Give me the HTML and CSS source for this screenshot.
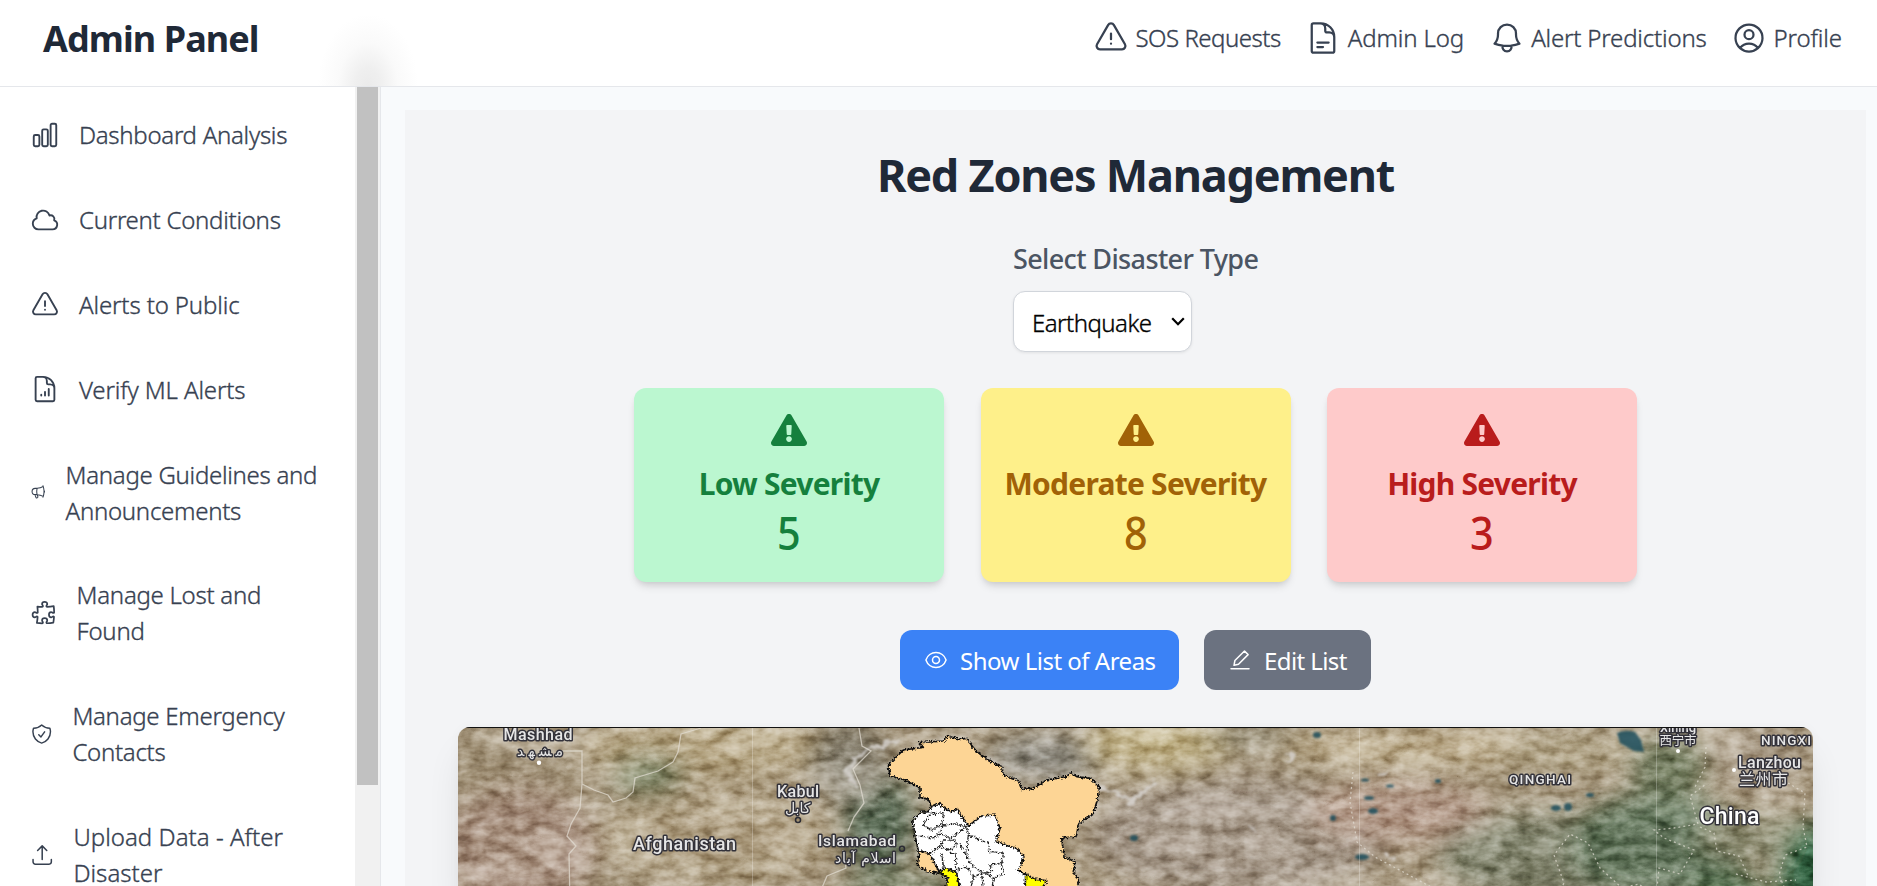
FILE: index.html
```
<!DOCTYPE html>
<html lang="en">
<head>
<meta charset="utf-8">
<title>Admin Panel</title>
<link rel="stylesheet" href="styles.css">
</head>
<body>
<div class="app">
  <header class="topbar">
    <div class="topbar-glow"></div>
    <h1 class="brand">Admin Panel</h1>
    <nav class="topnav">
      <a class="toplink"><svg class="icon" viewBox="0 0 24 24"><path d="M12 9v3.75m-9.303 3.376c-.866 1.5.217 3.374 1.948 3.374h14.71c1.73 0 2.813-1.874 1.948-3.374L13.949 3.378c-.866-1.5-3.032-1.5-3.898 0L2.697 16.126ZM12 15.75h.007v.008H12v-.008Z"/></svg><span class="t-sos">SOS Requests</span></a>
      <a class="toplink"><svg class="icon" viewBox="0 0 24 24"><path d="M19.5 14.25v-2.625a3.375 3.375 0 0 0-3.375-3.375h-1.5A1.125 1.125 0 0 1 13.5 7.125v-1.5a3.375 3.375 0 0 0-3.375-3.375H8.25m0 12.75h7.5m-7.5 3H12M10.5 2.25H5.625c-.621 0-1.125.504-1.125 1.125v17.25c0 .621.504 1.125 1.125 1.125h12.75c.621 0 1.125-.504 1.125-1.125V11.25a9 9 0 0 0-9-9Z"/></svg><span class="t-log">Admin Log</span></a>
      <a class="toplink"><svg class="icon" viewBox="0 0 24 24"><path d="M14.857 17.082a23.848 23.848 0 0 0 5.454-1.31A8.967 8.967 0 0 1 18 9.75V9A6 6 0 0 0 6 9v.75a8.967 8.967 0 0 1-2.312 6.022c1.733.64 3.56 1.085 5.455 1.31m5.714 0a24.255 24.255 0 0 1-5.714 0m5.714 0a3 3 0 1 1-5.714 0"/></svg><span class="t-pred">Alert Predictions</span></a>
      <a class="toplink"><svg class="icon" viewBox="0 0 24 24"><path d="M17.982 18.725A7.488 7.488 0 0 0 12 15.75a7.488 7.488 0 0 0-5.982 2.975m11.963 0a9 9 0 1 0-11.963 0m11.963 0A8.966 8.966 0 0 1 12 21a8.966 8.966 0 0 1-5.982-2.275M15 9.75a3 3 0 1 1-6 0 3 3 0 0 1 6 0Z"/></svg><span class="t-prof">Profile</span></a>
    </nav>
  </header>
  <div class="body">
    <aside class="sidebar">
      <nav class="menu">
        <a class="item"><svg class="icon" viewBox="0 0 24 24"><path d="M3 13.125C3 12.504 3.504 12 4.125 12h2.25c.621 0 1.125.504 1.125 1.125v6.75C7.5 20.496 6.996 21 6.375 21h-2.25A1.125 1.125 0 0 1 3 19.875v-6.75ZM9.75 8.625c0-.621.504-1.125 1.125-1.125h2.25c.621 0 1.125.504 1.125 1.125v11.25c0 .621-.504 1.125-1.125 1.125h-2.25a1.125 1.125 0 0 1-1.125-1.125V8.625ZM16.5 4.125c0-.621.504-1.125 1.125-1.125h2.25C20.496 3 21 3.504 21 4.125v15.75c0 .621-.504 1.125-1.125 1.125h-2.25a1.125 1.125 0 0 1-1.125-1.125V4.125Z"/></svg><span class="m1">Dashboard Analysis</span></a>
        <a class="item"><svg class="icon" viewBox="0 0 24 24"><path d="M2.25 15a4.5 4.5 0 0 0 4.5 4.5H18a3.75 3.75 0 0 0 1.332-7.257 3 3 0 0 0-3.758-3.848 5.25 5.25 0 0 0-10.233 2.33A4.502 4.502 0 0 0 2.25 15Z"/></svg><span class="m2">Current Conditions</span></a>
        <a class="item"><svg class="icon" viewBox="0 0 24 24"><path d="M12 9v3.75m-9.303 3.376c-.866 1.5.217 3.374 1.948 3.374h14.71c1.73 0 2.813-1.874 1.948-3.374L13.949 3.378c-.866-1.5-3.032-1.5-3.898 0L2.697 16.126ZM12 15.75h.007v.008H12v-.008Z"/></svg><span class="m3">Alerts to Public</span></a>
        <a class="item"><svg class="icon" viewBox="0 0 24 24"><path d="M19.5 14.25v-2.625a3.375 3.375 0 0 0-3.375-3.375h-1.5A1.125 1.125 0 0 1 13.5 7.125v-1.5a3.375 3.375 0 0 0-3.375-3.375H8.25M9 16.5v.75m3-3v3M15 12v5.25m-4.5-15H5.625c-.621 0-1.125.504-1.125 1.125v17.25c0 .621.504 1.125 1.125 1.125h12.75c.621 0 1.125-.504 1.125-1.125V11.25a9 9 0 0 0-9-9Z"/></svg><span class="m3">Verify ML Alerts</span></a>
        <a class="item"><svg class="icon w-megaphone" viewBox="0 0 24 24"><path d="M10.34 15.84c-.688-.06-1.386-.09-2.09-.09H7.5a4.5 4.5 0 1 1 0-9h.75c.704 0 1.402-.03 2.09-.09m0 9.18c.253.962.584 1.892.985 2.783.247.55.06 1.21-.463 1.511l-.657.38c-.551.318-1.26.117-1.527-.461a20.845 20.845 0 0 1-1.44-4.282m3.102.069a18.03 18.03 0 0 1-.59-4.59c0-1.586.205-3.124.59-4.59m0 9.18a23.848 23.848 0 0 1 8.835 2.535M10.34 6.66a23.847 23.847 0 0 0 8.835-2.535m0 0A23.74 23.74 0 0 0 18.795 3m.38 1.125a23.91 23.91 0 0 1 1.014 5.395m-1.014 8.855c-.118.38-.245.754-.38 1.125m.38-1.125a23.91 23.91 0 0 0 1.014-5.395m0-3.46c.495.413.811 1.035.811 1.73 0 .695-.316 1.317-.811 1.73m0-3.46a24.347 24.347 0 0 1 0 3.46"/></svg><span class="m1">Manage Guidelines and<br>Announcements</span></a>
        <a class="item"><svg class="icon w-puzzle" viewBox="0 0 24 24"><path d="M14.25 6.087c0-.355.186-.676.401-.959.221-.29.349-.634.349-1.003 0-1.036-1.007-1.875-2.25-1.875s-2.25.84-2.25 1.875c0 .369.128.713.349 1.003.215.283.401.604.401.959v0a.64.64 0 0 1-.657.643 48.39 48.39 0 0 1-4.163-.3c.186 1.613.293 3.25.315 4.907a.656.656 0 0 1-.658.663v0c-.355 0-.676-.186-.959-.401a1.647 1.647 0 0 0-1.003-.349c-1.036 0-1.875 1.007-1.875 2.25s.84 2.25 1.875 2.25c.369 0 .713-.128 1.003-.349.283-.215.604-.401.959-.401v0c.31 0 .555.26.532.57a48.039 48.039 0 0 1-.642 5.056c1.518.19 3.058.309 4.616.354a.64.64 0 0 0 .657-.643v0c0-.355-.186-.676-.401-.959a1.647 1.647 0 0 1-.349-1.003c0-1.035 1.008-1.875 2.25-1.875 1.243 0 2.25.84 2.25 1.875 0 .369-.128.713-.349 1.003-.215.283-.4.604-.4.959v0c0 .333.277.599.61.58a48.1 48.1 0 0 0 5.427-.63 48.05 48.05 0 0 0 .582-4.717.532.532 0 0 0-.533-.57v0c-.355 0-.676.186-.959.401-.29.221-.634.349-1.003.349-1.035 0-1.875-1.007-1.875-2.25s.84-2.25 1.875-2.25c.37 0 .713.128 1.003.349.283.215.604.401.96.401v0a.656.656 0 0 0 .658-.663 48.422 48.422 0 0 0-.37-5.36c-1.886.342-3.81.574-5.766.689a.578.578 0 0 1-.61-.58v0Z"/></svg><span class="m2">Manage Lost and<br>Found</span></a>
        <a class="item"><svg class="icon w-shield" viewBox="0 0 24 24"><path d="M9 12.75 11.25 15 15 9.75m-3-7.036A11.959 11.959 0 0 1 3.598 6 11.99 11.99 0 0 0 3 9.749c0 5.592 3.824 10.29 9 11.623 5.176-1.332 9-6.03 9-11.622 0-1.31-.21-2.571-.598-3.751h-.152c-3.196 0-6.1-1.248-8.25-3.285Z"/></svg><span class="m1">Manage Emergency<br>Contacts</span></a>
        <a class="item"><svg class="icon w-upload" viewBox="0 0 24 24"><path d="M3 16.5v2.25A2.25 2.25 0 0 0 5.25 21h13.5A2.25 2.25 0 0 0 21 18.75V16.5m-13.5-9L12 3m0 0 4.5 4.5M12 3v13.5"/></svg><span class="m4">Upload Data - After<br>Disaster</span></a>
      </nav>
      <div class="scrollbar"><div class="thumb"></div></div>
    </aside>
    <main class="content">
      <section class="panel">
        <h2 class="title">Red Zones Management</h2>
        <div class="field">
          <label class="label">Select Disaster Type</label>
          <div class="select"><span class="t-quake">Earthquake</span><svg class="chevron" viewBox="0 0 14 9"><path d="M1.2 1.2 7 7.2l5.8-6"/></svg></div>
        </div>
        <div class="cards">
          <article class="card low"><svg class="warn" viewBox="0 0 576 512"><path d="M569.517 440.013C587.975 472.007 564.806 512 527.94 512H48.054c-36.937 0-59.999-40.055-41.577-71.987L246.423 23.985c18.467-32.009 64.72-31.951 83.154 0l239.94 416.028zM288 354c-25.405 0-46 20.595-46 46s20.595 46 46 46 46-20.595 46-46-20.595-46-46-46zm-43.673-165.346l7.418 136c.347 6.364 5.609 11.346 11.982 11.346h48.546c6.373 0 11.635-4.982 11.982-11.346l7.418-136c.375-6.874-5.098-12.654-11.982-12.654h-63.383c-6.884 0-12.356 5.78-11.981 12.654z"/></svg><h3 class="card-title">Low Severity</h3><p class="count">5</p></article>
          <article class="card moderate"><svg class="warn" viewBox="0 0 576 512"><path d="M569.517 440.013C587.975 472.007 564.806 512 527.94 512H48.054c-36.937 0-59.999-40.055-41.577-71.987L246.423 23.985c18.467-32.009 64.72-31.951 83.154 0l239.94 416.028zM288 354c-25.405 0-46 20.595-46 46s20.595 46 46 46 46-20.595 46-46-20.595-46-46-46zm-43.673-165.346l7.418 136c.347 6.364 5.609 11.346 11.982 11.346h48.546c6.373 0 11.635-4.982 11.982-11.346l7.418-136c.375-6.874-5.098-12.654-11.982-12.654h-63.383c-6.884 0-12.356 5.78-11.981 12.654z"/></svg><h3 class="card-title">Moderate Severity</h3><p class="count">8</p></article>
          <article class="card high"><svg class="warn" viewBox="0 0 576 512"><path d="M569.517 440.013C587.975 472.007 564.806 512 527.94 512H48.054c-36.937 0-59.999-40.055-41.577-71.987L246.423 23.985c18.467-32.009 64.72-31.951 83.154 0l239.94 416.028zM288 354c-25.405 0-46 20.595-46 46s20.595 46 46 46 46-20.595 46-46-20.595-46-46-46zm-43.673-165.346l7.418 136c.347 6.364 5.609 11.346 11.982 11.346h48.546c6.373 0 11.635-4.982 11.982-11.346l7.418-136c.375-6.874-5.098-12.654-11.982-12.654h-63.383c-6.884 0-12.356 5.78-11.981 12.654z"/></svg><h3 class="card-title">High Severity</h3><p class="count">3</p></article>
        </div>
        <div class="actions">
          <button class="btn primary"><svg class="icon" viewBox="0 0 24 24"><path d="M2.036 12.322a1.012 1.012 0 0 1 0-.639C3.423 7.51 7.36 4.5 12 4.5c4.638 0 8.573 3.007 9.963 7.178.07.207.07.431 0 .639C20.577 16.49 16.64 19.5 12 19.5c-4.638 0-8.573-3.007-9.963-7.178Z"/><path d="M15.5 12a3.5 3.5 0 1 1-7 0 3.5 3.5 0 0 1 7 0Z"/></svg><span class="t-show">Show List of Areas</span></button>
          <button class="btn muted"><svg class="icon" viewBox="0 0 24 24"><path d="M3 20.7h18M6 17.3l.9-4.8L16.5 3l3.600 3.600L10.500 16.200Z"/></svg><span class="t-edit">Edit List</span></button>
        </div>
        <div class="map">
          <svg class="map-svg" viewBox="0 0 1355 176">
            <defs>
              <filter id="soft" x="-50%" y="-50%" width="200%" height="200%"><feGaussianBlur stdDeviation="12"/></filter>
              <filter id="soft-sm" x="-50%" y="-50%" width="200%" height="200%"><feGaussianBlur stdDeviation="1"/></filter>
              <filter id="relief" x="0" y="0" width="100%" height="100%" color-interpolation-filters="sRGB"><feTurbulence type="turbulence" baseFrequency=".014 .03" numOctaves="6" seed="8"/><feColorMatrix values="1.300 0 0 0 .36  1.300 0 0 0 .36  1.300 0 0 0 .36  0 0 0 0 1"/></filter>
              <filter id="grain" x="0" y="0" width="100%" height="100%" color-interpolation-filters="sRGB"><feTurbulence type="fractalNoise" baseFrequency=".07 .11" numOctaves="3" seed="3"/><feColorMatrix values="0 1.600 0 0 -.26  0 1.600 0 0 -.28  0 1.600 0 0 -.3  0 0 0 0 1"/></filter>
              <filter id="rough" x="-5%" y="-5%" width="110%" height="110%"><feTurbulence type="fractalNoise" baseFrequency=".16" numOctaves="2" seed="5"/><feDisplacementMap in="SourceGraphic" scale="16" xChannelSelector="R" yChannelSelector="G"/></filter>
              <filter id="drift" filterUnits="userSpaceOnUse" x="0" y="0" width="1355" height="176"><feTurbulence type="fractalNoise" baseFrequency=".1" numOctaves="3" seed="9"/><feDisplacementMap in="SourceGraphic" scale="14" xChannelSelector="R" yChannelSelector="G"/><feGaussianBlur stdDeviation=".8"/></filter>
            </defs>
            <rect width="1355" height="176" fill="#98896f"/>
            <g filter="url(#soft)">
              <ellipse cx="60" cy="120" rx="80" ry="60" fill="#98806e"/>
              <ellipse cx="250" cy="20" rx="130" ry="30" fill="#a79672"/>
              <ellipse cx="190" cy="48" rx="36" ry="20" fill="#5f6a4b"/>
              <ellipse cx="260" cy="110" rx="120" ry="50" fill="#9f8e70"/>
              <ellipse cx="420" cy="95" rx="38" ry="50" fill="#435540"/>
              <ellipse cx="390" cy="35" rx="40" ry="40" fill="#76705f"/>
              <ellipse cx="440" cy="165" rx="60" ry="18" fill="#596548"/>
              <ellipse cx="590" cy="30" rx="60" ry="22" fill="#7a786e"/>
              <ellipse cx="700" cy="16" rx="75" ry="28" fill="#b8a97e"/>
              <ellipse cx="790" cy="10" rx="50" ry="8" fill="#7d7963"/>
              <ellipse cx="780" cy="110" rx="150" ry="60" fill="#918373"/>
              <ellipse cx="940" cy="85" rx="90" ry="30" fill="#a18573"/>
              <ellipse cx="980" cy="20" rx="160" ry="20" fill="#ae9c79"/>
              <ellipse cx="1090" cy="130" rx="110" ry="45" fill="#686c54"/>
              <ellipse cx="1200" cy="120" rx="90" ry="55" fill="#4b6046"/>
              <ellipse cx="1110" cy="25" rx="70" ry="20" fill="#a09373"/>
              <ellipse cx="1210" cy="40" rx="40" ry="30" fill="#5f6a4e"/>
              <ellipse cx="1300" cy="30" rx="45" ry="35" fill="#988973"/>
              <ellipse cx="1300" cy="110" rx="60" ry="22" fill="#737358"/>
              <ellipse cx="1350" cy="145" rx="32" ry="50" fill="#245133"/>
              <ellipse cx="1270" cy="165" rx="40" ry="20" fill="#42603f"/>
            </g>
            <rect class="overlay" width="1355" height="176" filter="url(#relief)"/>
            <rect class="overlay grain" width="1355" height="176" filter="url(#grain)"/>
            <g class="snow" filter="url(#drift)">
              <path d="M388 45q8-16 22-22t28-8M390 46l8 14M644 62q18 6 26 10l6-4M670 76l20-14 8-8" stroke-width="4"/>
              <path d="M506 20q30 18 60 22t56 14M476 10l26 10" stroke-width="2" opacity=".5"/>
              <path d="M828 34l8-5M922 46l8-3M792 98l4 3M930 130l5 2" stroke-width="4"/>
            </g>
            <g class="lakes" filter="url(#soft-sm)">
              <path d="M1159 6q8-4 18-1l6 8 3 12-10-1-14-8Z"/>
              <ellipse cx="859" cy="8" rx="4" ry="3"/><ellipse cx="1098" cy="81" rx="5" ry="3"/><ellipse cx="1110" cy="80" rx="4" ry="4"/>
              <ellipse cx="907" cy="53" rx="4" ry="1.500"/><ellipse cx="932" cy="59" rx="4" ry="1.500"/><ellipse cx="911" cy="71" rx="5" ry="2"/><ellipse cx="915" cy="84" rx="5" ry="3"/><ellipse cx="904" cy="130" rx="7" ry="3"/><ellipse cx="875" cy="91" rx="3" ry="3"/><ellipse cx="676" cy="111" rx="4" ry="3"/><ellipse cx="980" cy="54" rx="3" ry="2"/><ellipse cx="1132" cy="68" rx="4" ry="2"/>
            </g>
            <path class="tile" d="M294.500 0v176M901.500 0v176M1198.500 0v176"/>
            <g class="border">
              <path d="M243 1l-20 6-3 18-5 10-15 9-23 7-2 14-7 6-13 4-5-7-14-5-12-6-2 24-9 16-4 12 9 10-7 8 1 48M124 57V24H104"/>
              <path d="M401 1l3 18 9 5-18 18 7 16 4 18-10 14-6 14M385 123l3 18-19 8-6 14"/>
            </g>
            <g class="border dotted">
              <path d="M895 45l-3 30 7 40 18 15 30 16 28 15 20 12M1096 176l10-20-10-28 16-21 18 9 12 25 22 20 17-4 17 14 3-30 21 6 14-24-30-12-10-8 20-2 24-4-8-28 16-12M1242 100l14 6 3 18 22 5 10 22M1278 147l30 8 30-2M1330 56l17 10-2 34 4 20-22 8-6 20 6 14M1248 20l-1 20-10 20"/>
            </g>
            <g transform="translate(402 -17) scale(.33333)">
              <g class="region" filter="url(#rough)">
                <path fill="#fdd595" d="M85 165 130 120 190 112 178 98 250 93 262 78 300 88 318 85 350 125 385 150 425 170 430 195 475 212 485 238 520 235 560 210 620 200 632 188 650 200 690 205 718 230 712 270 700 310 655 342 650 378 605 385 612 440 645 455 640 485 655 510 650 560 400 560 240 490 200 485 172 465 178 420 220 300 205 268 180 262 180 235 135 210 90 198Z"/>
                <path fill="#fff" d="M215 290 240 278 248 292 275 305 292 296 300 312 325 348 365 318 405 315 420 355 408 395 470 415 492 440 475 480 500 500 490 560 300 560 235 480 208 430 175 422 165 375 158 330 180 308 205 305Z"/>
                <path fill="#ff0" d="M235 485 255 475 290 490 305 560 250 560 265 505ZM497 490 525 508 560 512 530 560 495 560Z"/>
              </g>
              <g class="district" filter="url(#rough)"><path d="M190 345 210 312 250 308 245 345 215 360ZM250 345 285 342 320 350 325 375 385 400 390 430M165 375 220 385 240 370 250 345M240 370 270 385 300 365 320 350M210 430 240 410 250 390 285 390 290 410 265 420 245 410M245 430 250 470 290 485M270 430 285 430 290 480 320 470 340 500 365 490 370 530M320 440 340 470 370 490 395 485 390 465 425 460 430 430 395 425M300 400 320 440 325 375M425 460 430 490 400 505 380 490M340 500 330 545M400 505 395 550"/></g>
            </g>
            <g class="labels">
              <text x="45.500" y="13" font-size="16" textLength="69">Mashhad</text><text class="arabic" x="59" y="28.500" font-size="14" textLength="46">مشهد</text>
              <text x="319" y="70" font-size="16" textLength="42">Kabul</text><text class="arabic" x="327" y="86" font-size="14">کابل</text>
              <text x="175" y="123" font-size="18" textLength="103">Afghanistan</text>
              <text x="360" y="119" font-size="15.500" textLength="78">Islamabad</text><text class="arabic" x="377" y="135.500" font-size="14" textLength="61">اسلام آباد</text>
              <text x="1051" y="56.700" font-size="13.500" textLength="62">QINGHAI</text>
              <text x="1202" y="4.500" font-size="13" textLength="36">Xining</text><text class="cjk" x="1201.500" y="17.500" font-size="12.500" textLength="37">西宁市</text>
              <text x="1303" y="18" font-size="13.500" textLength="50">NINGXI</text>
              <text x="1280" y="40.500" font-size="16" textLength="63">Lanzhou</text><text class="cjk" x="1281" y="58" font-size="16" textLength="49">兰州市</text>
              <text x="1241.500" y="97" font-size="23" textLength="60" class="country">China</text>
            </g>
            <g fill="#fff"><circle cx="81" cy="35.700" r="2.200"/><circle cx="1220" cy="24" r="2"/><circle cx="1276" cy="43" r="2"/></g>
            <g fill="none" stroke="#2b2b33" stroke-width="1.500"><circle cx="340" cy="93" r="2.500"/><circle cx="444" cy="121.700" r="2.500"/></g>
            <rect width="1355" height="1" fill="#111"/>
          </svg>
        </div>
      </section>
    </main>
  </div>
</div>
</body>
</html>
```
FILE: styles.css
```
* { box-sizing: border-box; margin: 0; }
body { font-family: "Noto Sans", "Open Sans", sans-serif; font-size: 24px; line-height: 36px; color: #374151; background: #f8fafc; overflow: hidden; }
.app { height: 886px; display: flex; flex-direction: column; overflow: hidden; }
.icon { flex: none; width: 30px; height: 30px; fill: none; stroke: currentColor; stroke-width: 1.5; stroke-linecap: round; stroke-linejoin: round; }
.topbar { position: relative; flex: none; height: 87px; padding: 0 35px 11px 43px; display: flex; align-items: center; justify-content: space-between; background: #fff; border-bottom: 1px solid #e5e7eb; }
.topbar-glow { position: absolute; left: 308px; top: 6px; width: 120px; height: 80px; background: radial-gradient(ellipse 50px 72px at 60px 80px, #ebebeb 0, #efefef 25%, #fafafa 60%, #fff 100%); }
.brand { position: relative; padding-top: 3px; font-size: 36px; line-height: 48px; font-weight: 700; letter-spacing: -.93px; color: #1f2937; }
.topnav { display: flex; gap: 24.5px; }
.toplink { display: flex; align-items: center; gap: 6.5px; white-space: nowrap; }
.toplink .icon { width: 36px; height: 36px; }
.toplink span { padding-top: 1px; }
.toplink, .item, .t-quake { font-weight: 300; -webkit-text-stroke: .35px currentColor; }
.t-sos { letter-spacing: -.48px; }
.t-log { letter-spacing: -.13px; }
.t-pred { letter-spacing: -.18px; }
.t-prof { letter-spacing: -.1px; }
.body { flex: 1; min-height: 0; display: flex; }
.sidebar { flex: none; width: 381px; display: flex; justify-content: space-between; background: #fff; border-right: 1px solid #e5e7eb; overflow: hidden; }
.menu { padding: 18px 0 0 30px; display: flex; flex-direction: column; gap: 24.15px; }
.item { flex: none; display: flex; align-items: center; gap: 19px; padding: 12.35px 0; white-space: nowrap; }
.item .icon { margin-bottom: 1px; }
.m1 { letter-spacing: -.28px; }
.m2 { letter-spacing: -.27px; }
.m3 { letter-spacing: -.13px; }
.m4 { letter-spacing: .03px; }
.w-megaphone { width: 16.6px; }
.w-puzzle { width: 27.6px; }
.w-shield { width: 23.4px; }
.w-upload { width: 24.4px; }
.scrollbar { width: 25px; height: 799px; background: #f1f1f1; padding: 0 2px; }
.thumb { height: 698px; background: #c1c1c1; }
.content { flex: 1; padding: 23px 11px 0 24px; }
.panel { height: 800px; padding: 38px 53px 0; background: #f3f4f6; display: flex; flex-direction: column; align-items: center; }
.title { font-size: 45px; line-height: 54px; font-weight: 700; letter-spacing: -1.22px; color: #1f2937; }
.field { margin-top: 36px; width: 245px; }
.label { display: block; font-size: 27px; line-height: 42px; font-weight: 500; letter-spacing: -.63px; color: #4b5563; white-space: nowrap; }
.select { width: 179px; height: 61px; margin-top: 11px; padding: 0 6px 0 18px; display: flex; align-items: center; justify-content: space-between; background: #fff; border: 1px solid #d1d5db; border-radius: 12px; color: #000; box-shadow: 0 1px 3px rgba(0,0,0,.08); }
.t-quake { padding-top: 2px; letter-spacing: -.52px; }
.chevron { width: 14px; height: 9px; fill: none; stroke: #000; stroke-width: 2.2; }
.cards { margin-top: 36px; display: flex; gap: 36.5px; }
.card { width: 310px; height: 194px; padding-top: 26px; display: flex; flex-direction: column; align-items: center; border-radius: 12px; box-shadow: 0 6px 9px -2px rgba(0,0,0,.13), 0 3px 6px -3px rgba(0,0,0,.1); }
.low { background: #bbf7d0; color: #15803d; }
.moderate { background: #fef08a; color: #a16207; }
.high { background: #fecaca; color: #b91c1c; }
.warn { width: 36px; height: 32px; fill: currentColor; }
.card-title { margin-top: 16.500px; font-size: 30px; line-height: 42px; font-weight: 700; letter-spacing: -.76px; white-space: nowrap; }
.count { margin-top: 1px; font-size: 45px; line-height: 54px; font-weight: 500; transform: scaleX(.92); }
.actions { margin-top: 48px; display: flex; gap: 25px; }
.btn { width: 279px; height: 60px; border: 0; border-radius: 12px; padding: 0 0 0 24px; display: flex; align-items: center; gap: 12px; color: #fff; font: inherit; white-space: nowrap; }
.btn .icon { width: 24px; height: 24px; }
.btn span { padding-top: 2px; }
.t-show { letter-spacing: -.5px; }
.t-edit { letter-spacing: -.6px; }
.primary { background: #3b82f6; }
.muted { width: 167px; background: #6b7280; }
.map { flex: none; width: 1355px; height: 176px; margin-top: 37px; border-radius: 12px; overflow: hidden; box-shadow: 0 22px 38px -8px rgba(0,0,0,.12), 0 0 12px rgba(0,0,0,.03); }
.map-svg { display: block; width: 1355px; height: 176px; isolation: isolate; }
.overlay { mix-blend-mode: soft-light; opacity: .8; }
.grain { opacity: .6; }
.snow { fill: none; stroke: #d9d6d3; stroke-linecap: round; opacity: .8; }
.lakes { fill: #1f4d5c; opacity: .85; }
.tile { stroke: #fff; stroke-width: 1; opacity: .25; }
.border { fill: none; stroke: #e4dfd5; stroke-width: 1.3; opacity: .7; }
.dotted { stroke-dasharray: 2 3; }
.region { stroke: #111; stroke-width: 5; stroke-linejoin: round; }
.district { fill: none; stroke: #222; stroke-width: 4; stroke-dasharray: 12 2; }
.labels { font-family: Roboto, sans-serif; font-weight: 500; fill: #e6e6e6; stroke: #33323a; stroke-width: 3px; stroke-linejoin: round; paint-order: stroke; }
.country { fill: #fff; }
.arabic { font-family: "DejaVu Sans", sans-serif; font-weight: 400; }
.cjk { font-family: "Noto Sans CJK SC", sans-serif; font-weight: 400; }
```
